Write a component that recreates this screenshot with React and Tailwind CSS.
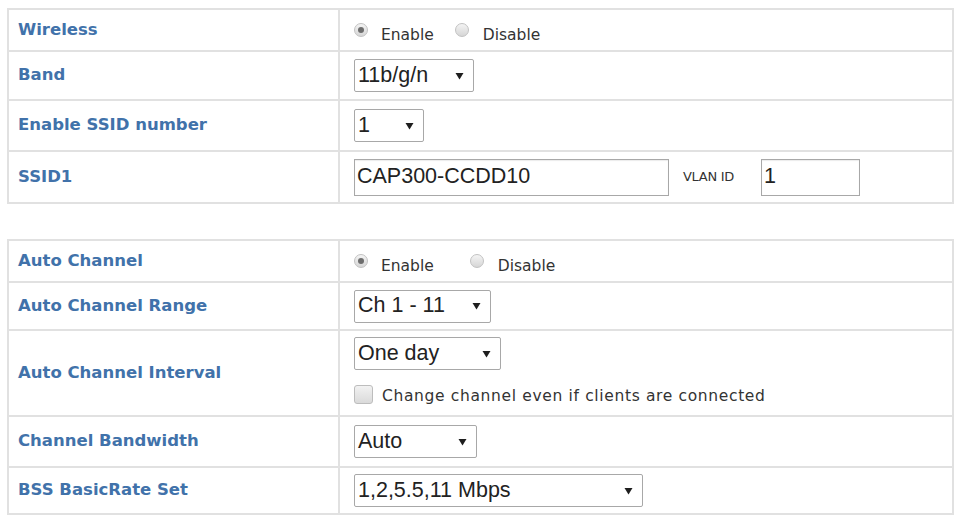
const labelFont = { fontFamily: '"DejaVu Sans", Verdana, sans-serif' };

function Radio({ checked }) {
  return (
    <span className="mb-[13px] flex h-[14px] w-[14px] shrink-0 items-center justify-center rounded-full border border-[#c2c2c2] bg-gradient-to-b from-[#f4f4f4] to-[#d6d6d6]">
      {checked && <span className="h-[6px] w-[6px] rounded-full bg-[#6d6d6d]" />}
    </span>
  );
}

function Arrow() {
  return (
    <svg width="9" height="8" viewBox="0 0 9 8" className="shrink-0">
      <path d="M0.5 1 L8.5 1 L4.5 7.5 Z" fill="#1e1e1e" />
    </svg>
  );
}

function Select({ value, width }) {
  return (
    <div
      className="flex h-[33px] items-center justify-between rounded-[2px] border border-[#a8a8a8] bg-white pl-[3px] pr-[9px] font-['Liberation_Sans',Arial,sans-serif] text-[21.5px] leading-none text-[#222]"
      style={{ width }}
    >
      <span>{value}</span>
      <Arrow />
    </div>
  );
}

function Input({ value, width }) {
  return (
    <div
      className="flex h-[37px] items-center border border-[#a8a8a8] bg-white pl-[2px] font-['Liberation_Sans',Arial,sans-serif] text-[21.5px] leading-none text-[#222] shadow-[inset_0_1px_1px_rgba(0,0,0,0.08)]"
      style={{ width }}
    >
      {value}
    </div>
  );
}

function Row({ label, height, children, last }) {
  return (
    <div className={`flex ${last ? '' : 'border-b-2 border-[#e1e1e1]'}`} style={{ height }}>
      <div
        className="flex w-[331px] shrink-0 items-center border-r-2 border-[#e1e1e1] pl-[9px] text-[16.5px] font-bold text-[#4172aa]"
        style={labelFont}
      >
        {label}
      </div>
      <div className="flex flex-1 items-center pl-[14px] text-[15.5px] text-[#333]" style={labelFont}>
        {children}
      </div>
    </div>
  );
}

function EnableDisable({ wide }) {
  return (
    <div className="mt-[12px] flex items-center">
      <Radio checked />
      <span className="ml-[13px]">Enable</span>
      <span className={wide ? 'ml-[36px] flex items-center' : 'ml-[21px] flex items-center'}>
        <Radio />
      </span>
      <span className="ml-[14px]">Disable</span>
    </div>
  );
}

export default function App() {
  return (
    <div className="min-h-[515px] w-[956px] bg-white pl-[7px] pt-[8px]">
      <div className="w-[947px] border-2 border-[#e1e1e1]">
        <Row label="Wireless" height={42}>
          <EnableDisable />
        </Row>
        <Row label="Band" height={49}>
          <Select value="11b/g/n" width={120} />
        </Row>
        <Row label="Enable SSID number" height={51}>
          <Select value="1" width={70} />
        </Row>
        <Row label="SSID1" height={50} last>
          <Input value="CAP300-CCDD10" width={315} />
          <span className="ml-[14px] mr-[27px] text-[13px] tracking-[-0.3px] text-[#333]">VLAN ID</span>
          <Input value="1" width={99} />
        </Row>
      </div>

      <div className="mt-[35px] w-[947px] border-2 border-[#e1e1e1]">
        <Row label="Auto Channel" height={42}>
          <EnableDisable wide />
        </Row>
        <Row label="Auto Channel Range" height={48}>
          <Select value="Ch 1 - 11" width={137} />
        </Row>
        <Row label="Auto Channel Interval" height={86}>
          <div className="flex flex-col">
            <Select value="One day" width={147} />
            <div className="mt-[9px] flex items-center">
              <span className="h-[19px] w-[19px] rounded-[3px] border border-[#bdbdbd] bg-gradient-to-b from-[#f2f2f2] to-[#dadada]" />
              <span className="ml-[9px] mt-[6px] text-[15.5px] tracking-[0.65px]">Change channel even if clients are connected</span>
            </div>
          </div>
        </Row>
        <Row label="Channel Bandwidth" height={51}>
          <Select value="Auto" width={123} />
        </Row>
        <Row label="BSS BasicRate Set" height={45} last>
          <Select value="1,2,5.5,11 Mbps" width={289} />
        </Row>
      </div>
    </div>
  );
}
